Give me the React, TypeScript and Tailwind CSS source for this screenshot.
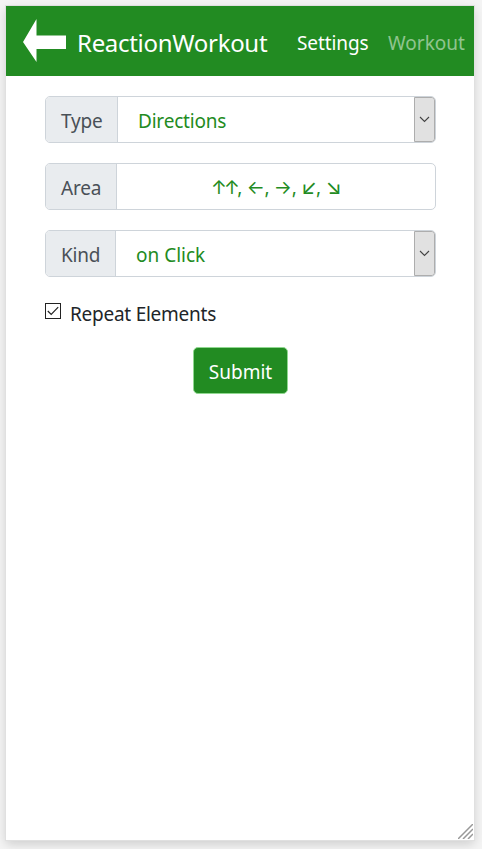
import type { ReactNode } from 'react';

function Addon({ children, width }: { children: ReactNode; width: string }) {
  return (
    <span className={`${width} flex shrink-0 items-center border-r border-[#ced4da] bg-[#e9ecef] pl-[15px] pt-[3px] tracking-[-0.2px] text-[#495057]`}>
      {children}
    </span>
  );
}

function SelectRow({ label, width, value, valueClass }: { label: ReactNode; width: string; value: string; valueClass: string }) {
  return (
    <div className="flex h-[47px] overflow-hidden rounded-[5px] border border-[#ced4da]">
      <Addon width={width}>{label}</Addon>
      <span className={`flex flex-1 items-center pl-5 pt-[3px] text-[#228b22] ${valueClass}`}>{value}</span>
      <span className="flex w-[21px] items-center justify-center rounded-r-[3px] border border-[#adadad] bg-[#e1e1e1]">
        <svg width="11" height="7" viewBox="0 0 11 7" fill="none" stroke="#444" strokeWidth="1.1">
          <path d="M1 1 5.5 5.5 10 1" />
        </svg>
      </span>
    </div>
  );
}

export default function App() {
  return (
    <div className="h-[849px] w-[482px] bg-[#f4f4f4] p-[6px] font-['Noto_Sans','Open_Sans',sans-serif] text-[19px] leading-[28px] text-[#212529]">
      <div className="flex h-[834px] w-[468px] flex-col bg-white shadow-[0_0_0_1px_#e0e0e0,0_4px_10px_rgba(0,0,0,0.16)]">
        <header className="flex h-[70px] shrink-0 items-center bg-[#228b22] pl-[17px] text-white">
          <svg width="43" height="43" viewBox="0 0 43 43" fill="#fff" className="-mt-px mr-[11px]">
            <path d="M0 23 13.5 0V16.5H43V30H13.5V43Z" />
          </svg>
          <span className="w-[220px] whitespace-nowrap pt-[3px] text-[24px] tracking-[-0.3px]">ReactionWorkout</span>
          <span className="w-[91px] pt-[3px] tracking-[-0.1px]">Settings</span>
          <span className="pt-[3px] text-white/50">Workout</span>
        </header>
        <main className="flex flex-1 flex-col pl-[39px] pr-[38px] pt-5">
          <div className="flex flex-col gap-5">
            <SelectRow label="Type" width="w-[72px]" value="Directions" valueClass="tracking-[-0.2px]" />
            <div className="flex h-[47px] overflow-hidden rounded-[5px] border border-[#ced4da]">
              <Addon width="w-[71px]">Area</Addon>
              <span className="flex-1 whitespace-pre pl-[94px] pt-[9px] font-['Inter','DejaVu_Sans',sans-serif] tracking-[-0.6px] text-[#228b22]">
                <span className="tracking-[-2.8px]">↑↑</span>, ←, →, <span className="text-[21px] tracking-[-1.5px]">↙</span>, <span className="text-[21px]">↘</span>
              </span>
            </div>
            <SelectRow label="Kind" width="w-[70px]" value="on Click" valueClass="" />
          </div>
          <label className="mt-[22px] flex h-[30px] items-start">
            <span className="mt-[4px] flex h-4 w-4 items-center justify-center border border-[#222] bg-white">
              <svg width="12" height="10" viewBox="0 0 12 10" fill="none" stroke="#222" strokeWidth="1.2">
                <path d="M.8 5 4.2 8.4 11.2 1.2" />
              </svg>
            </span>
            <span className="ml-[9px] pt-[1px] tracking-[-0.25px]">Repeat Elements</span>
          </label>
          <button className="ml-[148px] mt-[18px] flex h-[47px] w-[95px] items-center justify-center rounded-[5px] border border-[#90d890] bg-[#228b22] pt-[3px] text-white">
            Submit
          </button>
          <div className="flex-1" />
          <svg width="15" height="15" viewBox="0 0 15 15" stroke="#999" strokeWidth="1.5" className="-mr-[37px] mb-px self-end">
            <path d="M0 15 15 0M5 15 15 5M10 15 15 10" />
          </svg>
        </main>
      </div>
    </div>
  );
}
